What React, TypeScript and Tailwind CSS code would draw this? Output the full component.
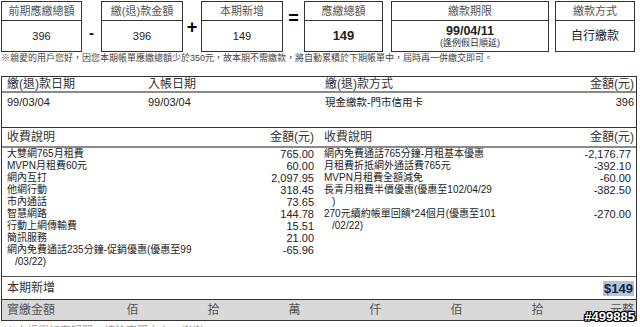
const FONT = "font-['Liberation_Sans','Noto_Sans_CJK_TC',sans-serif]";

type Charge = { name: string; cont?: string; amount: string };

const leftCharges: Charge[] = [
  { name: '大雙網765月租費', amount: '765.00' },
  { name: 'MVPN月租費60元', amount: '60.00' },
  { name: '網內互打', amount: '2,097.95' },
  { name: '他網行動', amount: '318.45' },
  { name: '市內通話', amount: '73.65' },
  { name: '智慧網路', amount: '144.78' },
  { name: '行動上網傳輸費', amount: '15.51' },
  { name: '簡訊服務', amount: '21.00' },
  { name: '網內免費通話235分鐘-促銷優惠(優惠至99', cont: '/03/22)', amount: '-65.96' },
];

const rightCharges: Charge[] = [
  { name: '網內免費通話765分鐘-月租基本優惠', amount: '-2,176.77' },
  { name: '月租費折抵網外通話費765元', amount: '-392.10' },
  { name: 'MVPN月租費全額減免', amount: '-60.00' },
  { name: '長青月租費半價優惠(優惠至102/04/29', cont: ')', amount: '-382.50' },
  { name: '270元續約帳單回饋*24個月(優惠至101', cont: '/02/22)', amount: '-270.00' },
];

type SumBoxProps = {
  title: string;
  width: string;
  children: React.ReactNode;
};

function SumBox({ title, width, children }: SumBoxProps) {
  return (
    <div className={`flex h-[51px] shrink-0 flex-col border border-[#333] ${width}`}>
      <div className="flex h-[19px] items-center justify-center border-b border-[#333] text-[11px] leading-none text-[#555]">
        {title}
      </div>
      <div className="flex flex-1 flex-col items-center justify-center text-[#222]">{children}</div>
    </div>
  );
}

function ChargeColumn({ items }: { items: Charge[] }) {
  return (
    <div className="flex w-1/2 flex-col px-[5px] text-[10px] leading-[12px] text-[#222]">
      {items.map((item) => (
        <div key={item.name} className="flex items-start justify-between">
          <div className="flex flex-col">
            <span className="whitespace-nowrap">{item.name}</span>
            {item.cont ? <span className="pl-[8px] whitespace-nowrap">{item.cont}</span> : null}
          </div>
          <span className="text-[11px] whitespace-nowrap">{item.amount}</span>
        </div>
      ))}
    </div>
  );
}

export default function App() {
  const digits = ['佰', '拾', '萬', '仟', '佰', '拾'];

  return (
    <div className={`relative h-[327px] w-[640px] overflow-hidden bg-white ${FONT}`}>
      {/* 上方總額試算 */}
      <div className="flex items-start pl-[1px] pt-[1px]">
        <SumBox title="前期應繳總額" width="w-[81px]">
          <span className="text-[11px]">396</span>
        </SumBox>
        <div className="flex w-[19px] justify-center pt-[24px] text-[15px] font-bold leading-none">-</div>
        <SumBox title="繳(退)款金額" width="w-[82px]">
          <span className="text-[11px]">396</span>
        </SumBox>
        <div className="flex w-[18px] justify-center pt-[17px] text-[18px] font-bold leading-none">+</div>
        <SumBox title="本期新增" width="w-[82px]">
          <span className="text-[11px]">149</span>
        </SumBox>
        <div className="flex w-[21px] justify-center pt-[8px] text-[18px] font-bold leading-none">=</div>
        <SumBox title="應繳總額" width="w-[79px]">
          <span className="text-[13px] font-bold">149</span>
        </SumBox>
        <div className="w-[8px] shrink-0" />
        <SumBox title="繳款期限" width="w-[158px]">
          <span className="text-[12.5px] font-bold leading-[14px]">99/04/11</span>
          <span className="text-[9px] leading-[11px] text-[#333]">(逢例假日順延)</span>
        </SumBox>
        <div className="w-[6px] shrink-0" />
        <SumBox title="繳款方式" width="w-[80px]">
          <span className="text-[12px]">自行繳款</span>
        </SumBox>
      </div>

      <div className="h-[12px] whitespace-nowrap pl-[1px] text-[9px] leading-[12px] text-[#444]">
        ※親愛的用戶您好，因您本期帳單應繳總額少於350元，故本期不需繳款，將自動累積於下期帳單中，屆時再一併繳交即可。
      </div>

      {/* 明細表 */}
      <div className="ml-[1px] mt-[12px] w-[636px] border-x border-t border-[#333]">
        <div className="flex h-[14px] items-center text-[12px] leading-none text-[#333]">
          <span className="w-[146px] pl-[5px]">繳(退)款日期</span>
          <span className="w-[177px]">入帳日期</span>
          <span className="flex-1">繳(退)款方式</span>
          <span className="pr-[2px]">金額(元)</span>
        </div>
        <div className="h-[2px] bg-[#8a8a8a]" />
        <div className="flex h-[34px] items-start pt-[3px] text-[10.5px] leading-[12px] text-[#222]">
          <span className="w-[146px] pl-[5px] text-[11px]">99/03/04</span>
          <span className="w-[177px] text-[11px]">99/03/04</span>
          <span className="flex-1">現金繳款-門市信用卡</span>
          <span className="pr-[2px] text-[11px]">396</span>
        </div>

        <div className="flex h-[19px] items-center border-t border-[#333] text-[12px] leading-none text-[#333]">
          <div className="flex w-1/2 justify-between px-[5px]">
            <span>收費說明</span>
            <span>金額(元)</span>
          </div>
          <div className="flex w-1/2 justify-between pl-[5px] pr-[2px]">
            <span>收費說明</span>
            <span>金額(元)</span>
          </div>
        </div>
        <div className="h-[2px] bg-[#8a8a8a]" />
        <div className="flex h-[128px]">
          <ChargeColumn items={leftCharges} />
          <ChargeColumn items={rightCharges} />
        </div>

        <div className="flex h-[23px] items-center justify-between border-t border-[#555] pl-[5px] pr-[2px]">
          <span className="text-[12px] text-[#333]">本期新增</span>
          <span className="bg-[#b0c4da] px-px text-[13px] font-bold leading-[15px] text-[#12233d]">$149</span>
        </div>

        <div className="flex h-[22px] items-center border-y border-[#333] bg-[#d9d9d9] text-[12px] leading-none text-[#555]">
          <span className="w-[90px] pl-[5px]">實繳金額</span>
          {digits.map((d, i) => (
            <span key={i} className="w-[81px] text-center">
              {d}
            </span>
          ))}
          <span className="flex-1 pr-[2px] text-right">元整</span>
        </div>
      </div>

      <div className="whitespace-nowrap pl-[5px] pt-[3px] text-[11px] leading-[14px] text-[#999]">
        ※本帳單如有疑問，請洽客服中心，謝謝。
      </div>

      <span className="absolute right-[5px] top-[310px] text-[13px] font-bold leading-none text-white [text-shadow:1px_0_0_#000,-1px_0_0_#000,0_1px_0_#000,0_-1px_0_#000,1px_1px_0_#000,-1px_-1px_0_#000,1px_-1px_0_#000,-1px_1px_0_#000]">
        #499885
      </span>
    </div>
  );
}
